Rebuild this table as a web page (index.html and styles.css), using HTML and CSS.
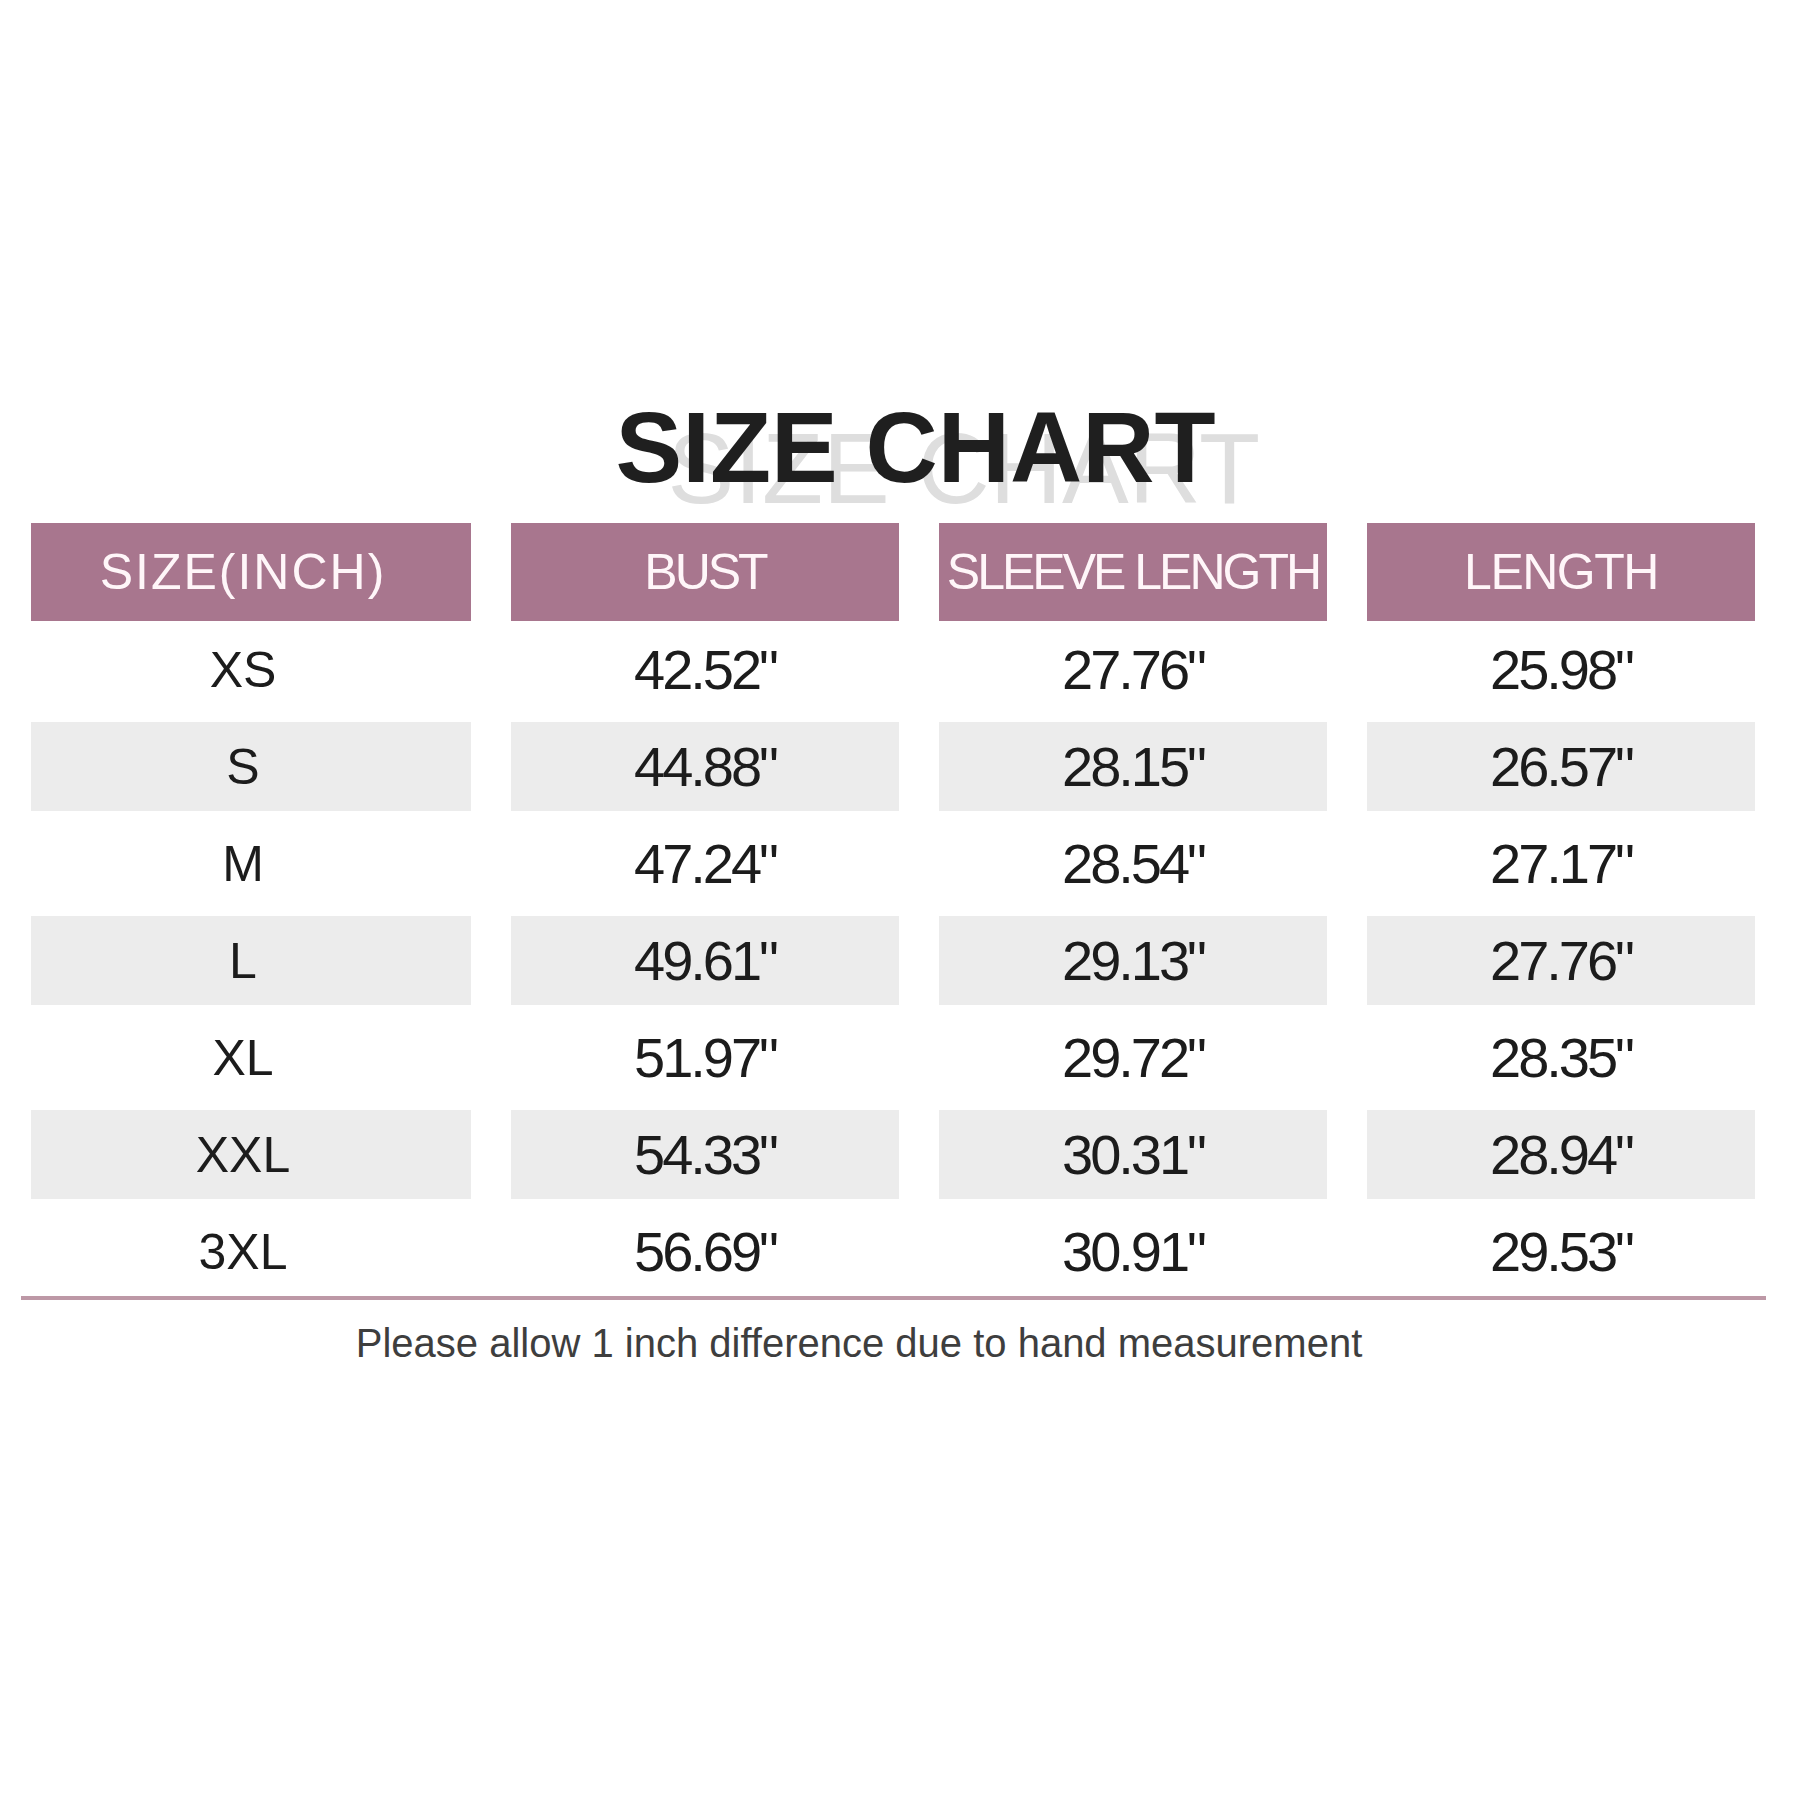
FILE: index.html
```html
<!DOCTYPE html>
<html lang="en">
<head>
<meta charset="utf-8">
<title>Size Chart</title>
<link rel="stylesheet" href="styles.css">
</head>
<body>
<main class="page">
  <h1 class="title-row">
    <span class="title">SIZE CHART<span class="ghost" aria-hidden="true">SIZE CHART</span></span>
  </h1>
  <div class="chart">
    <div class="head c1"><span class="h-size">SIZE(INCH)</span></div>
    <div class="head"><span class="h-bust">BUST</span></div>
    <div class="head"><span class="h-sleeve">SLEEVE LENGTH</span></div>
    <div class="head"><span class="h-length">LENGTH</span></div>

    <div class="cell c1 size">XS</div><div class="cell num">42.52"</div><div class="cell num">27.76"</div><div class="cell num">25.98"</div>
    <div class="cell band c1 size">S</div><div class="cell band num">44.88"</div><div class="cell band num">28.15"</div><div class="cell band num">26.57"</div>
    <div class="cell c1 size">M</div><div class="cell num">47.24"</div><div class="cell num">28.54"</div><div class="cell num">27.17"</div>
    <div class="cell band c1 size">L</div><div class="cell band num">49.61"</div><div class="cell band num">29.13"</div><div class="cell band num">27.76"</div>
    <div class="cell c1 size">XL</div><div class="cell num">51.97"</div><div class="cell num">29.72"</div><div class="cell num">28.35"</div>
    <div class="cell band c1 size">XXL</div><div class="cell band num">54.33"</div><div class="cell band num">30.31"</div><div class="cell band num">28.94"</div>
    <div class="cell c1 size">3XL</div><div class="cell num">56.69"</div><div class="cell num">30.91"</div><div class="cell num">29.53"</div>
  </div>
  <div class="rule"></div>
  <p class="note">Please allow 1 inch difference due to hand measurement</p>
</main>
</body>
</html>
```

FILE: styles.css
```css
html, body {
  margin: 0;
  padding: 0;
  background: #ffffff;
}

body {
  font-family: "Liberation Sans", Arial, sans-serif;
  width: 1800px;
  height: 1800px;
  overflow: hidden;
}

.page {
  padding-top: 397px;
}

.title-row {
  margin: 0;
  padding-left: 31px;
  height: 100px;
  text-align: center;
  font-size: 100px;
  line-height: 100px;
  font-weight: 700;
  color: #1f1f1f;
}

.title {
  position: relative;
  display: inline-block;
  z-index: 0;
}

.ghost {
  position: absolute;
  left: 52px;
  top: 21px;
  z-index: -1;
  font-weight: 400;
  color: #dedede;
  white-space: nowrap;
}

.chart {
  margin: 26px 0 0 31px;
  display: grid;
  grid-template-columns: 440px 388px 388px 388px;
  grid-template-rows: 98px repeat(7, 97px);
  column-gap: 40px;
}

.head {
  background: #a8768e;
  color: #fff6f9;
  font-size: 50px;
  display: flex;
  align-items: center;
  justify-content: center;
  white-space: nowrap;
}

.h-size { letter-spacing: 2px; }
.h-bust { letter-spacing: -3px; }
.h-sleeve { letter-spacing: -3px; }
.h-length { letter-spacing: -1.5px; }

.c1 {
  padding-right: 16px;
}

.cell {
  display: flex;
  align-items: center;
  justify-content: center;
  color: #1c1c1c;
  white-space: nowrap;
}

.band {
  background: #ececec;
  margin: 4px 0;
}

.size {
  font-size: 50px;
}

.num {
  font-size: 56px;
  letter-spacing: -3px;
}

.rule {
  margin: -4px 0 0 21px;
  width: 1745px;
  height: 4px;
  background: #bd98a6;
}

.note {
  margin: 20px 0 0;
  padding-right: 82px;
  text-align: center;
  font-size: 40px;
  line-height: 46px;
  color: #3e3e3e;
}
```
